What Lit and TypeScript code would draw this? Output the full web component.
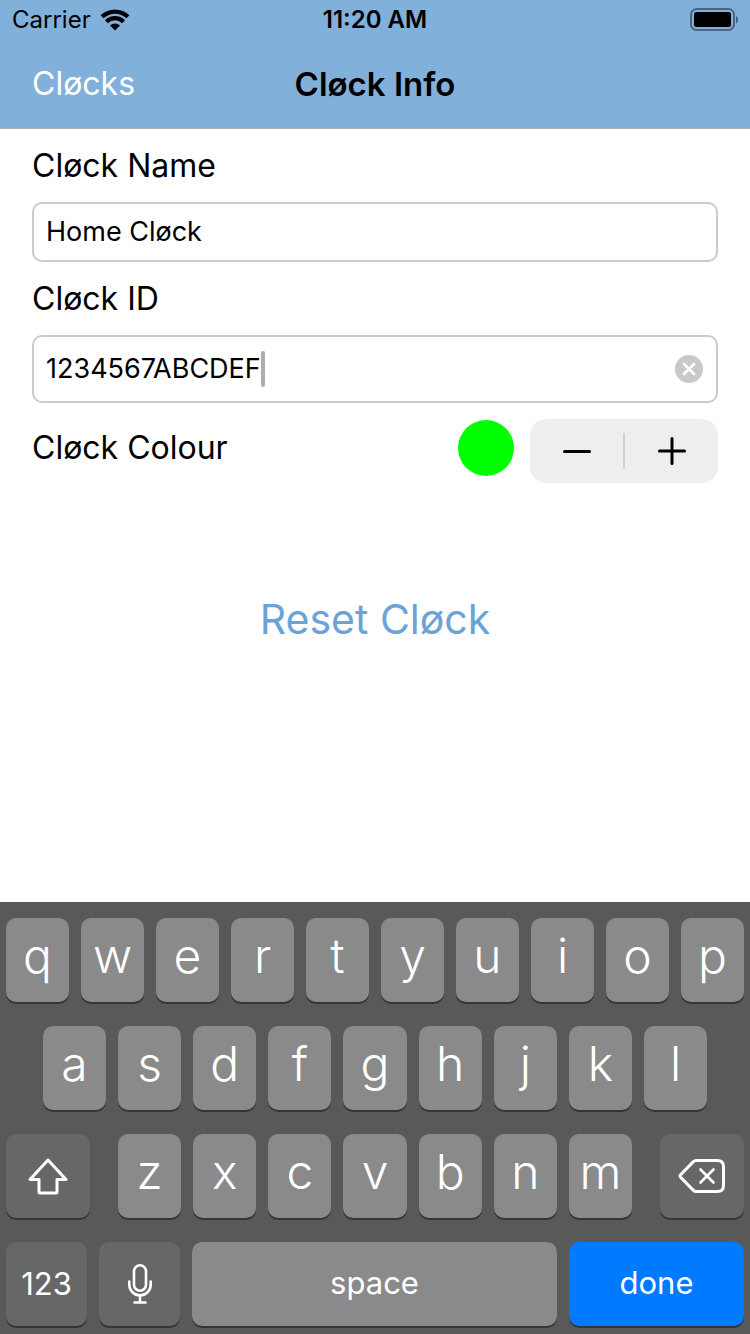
import { LitElement, html, css, svg } from "lit";
import { customElement, property, state } from "lit/decorators.js";
import { classMap } from "lit/directives/class-map.js";

const reset = css`
  *, *::before, *::after { box-sizing: border-box; }
  button, input {
    margin: 0;
    padding: 0;
    border: 0;
    background: none;
    color: inherit;
    font: inherit;
    outline: none;
  }
  button { cursor: pointer; }
  svg { display: block; }
`;

@customElement("status-bar")
export class StatusBar extends LitElement {
  static styles = [reset, css`
    :host {
      display: grid;
      grid-template-columns: 1fr auto 1fr;
      align-items: center;
      height: 40px;
      padding: 0 12px;
      font-size: 24px;
      line-height: 28px;
    }
    .carrier { display: flex; align-items: center; gap: 9px; }
    .time { font-weight: 600; }
    .battery { justify-self: end; }
  `];

  render() {
    return html`
      <span class="carrier">
        Carrier
        <svg width="30" height="22" viewBox="0 0 30 22" role="img" aria-label="Wi-Fi">
          <path d="M.6 6.300a20.600 20.600 0 0 1 28.800 0l-2.900 3a16.500 16.500 0 0 0-23 0z"/>
          <path d="M5 11.200a14.200 14.200 0 0 1 20 0l-3 3a10 10 0 0 0-14 0z"/>
          <path d="M10 16.500a7.200 7.200 0 0 1 10 0L15 21.600z"/>
        </svg>
      </span>
      <span class="time">11:20 AM</span>
      <svg class="battery" width="48" height="24" viewBox="0 0 48 24" role="img" aria-label="Battery full">
        <rect x="1" y="1" width="43" height="21" rx="5.500" fill="none" stroke="#000" stroke-opacity=".42" stroke-width="2"/>
        <rect x="4" y="4" width="37" height="15" rx="2.500"/>
        <path d="M46 8v7.500c2.700-1.300 2.700-6.200 0-7.500z" fill-opacity=".45"/>
      </svg>
    `;
  }
}

type Key = { id: string; label: unknown; name?: string; kind?: "plain" | "dark" | "word" | "dark-word" | "done" };

const letters = (text: string): Key[] => [...text].map((c) => ({ id: c, label: c }));

const shiftIcon = svg`<svg width="42" height="38" viewBox="0 0 42 38" fill="none" stroke="#fff" stroke-width="3" stroke-linejoin="round">
  <path d="M21 3 3 22.500h9V35q0 1 1 1h16q1 0 1-1V22.500h9z"/></svg>`;
const deleteIcon = svg`<svg width="48" height="36" viewBox="0 0 48 36" fill="none" stroke="#fff" stroke-width="3" stroke-linecap="round" stroke-linejoin="round">
  <path d="M18 2.500h21.500q6 0 6 6v19q0 6-6 6H18q-1.500 0-2.600-1.100L2.600 19.200q-1.100-1.200 0-2.400L15.400 3.600Q16.500 2.500 18 2.500z"/>
  <path stroke-width="2.600" d="m22.500 11.500 13 13m0-13-13 13"/></svg>`;
const micIcon = svg`<svg width="26" height="42" viewBox="0 0 26 42" fill="none" stroke="#fff" stroke-width="2.600" stroke-linecap="round">
  <rect x="7" y="2.300" width="12" height="25.500" rx="6"/>
  <path d="M2.300 18.500v3.200a10.700 10.700 0 0 0 21.400 0v-3.200M13 32.500v6M7.500 39.500h11"/></svg>`;

@customElement("key-board")
export class KeyBoard extends LitElement {
  static styles = [reset, css`
    :host {
      display: flex;
      flex-direction: column;
      gap: 24px;
      padding: 16px 6px 8px;
      background: #595959;
      color: #fff;
    }
    .row { display: grid; grid-auto-flow: column; grid-auto-columns: 1fr; gap: 12px; }
    .home { padding: 0 5%; }
    .lower { grid-auto-columns: auto; grid-template-columns: 84fr 514fr 84fr; gap: 28px; }
    .bottom { grid-auto-columns: auto; grid-template-columns: 81fr 81fr 365fr 175fr; }
    .key {
      display: flex;
      align-items: center;
      justify-content: center;
      width: 100%;
      min-width: 0;
      height: 84px;
      padding-bottom: 8px;
      border-radius: 10px;
      background: #8a8a8a;
      box-shadow: 0 2px 0 #353535;
      font-size: 48px;
      font-weight: 300;
      line-height: 58px;
    }
    .word { padding-bottom: 2px; font-size: 31px; font-weight: 400; line-height: 38px; }
    .dark { padding-bottom: 0; background: #676767; }
    .done { background: #007aff; }
  `];

  private key(k: Key) {
    const kind = k.kind ?? "plain";
    return html`<button
      type="button"
      class=${classMap({
        key: true,
        dark: kind === "dark" || kind === "dark-word",
        word: kind === "word" || kind === "dark-word" || kind === "done",
        done: kind === "done",
      })}
      aria-label=${k.name ?? k.id}
      @click=${() => this.dispatchEvent(new CustomEvent("key-press", { detail: k.id }))}
    >${k.label}</button>`;
  }

  render() {
    return html`
      <div class="row">${letters("qwertyuiop").map((k) => this.key(k))}</div>
      <div class="row home">${letters("asdfghjkl").map((k) => this.key(k))}</div>
      <div class="row lower">
        ${this.key({ id: "shift", label: shiftIcon, kind: "dark" })}
        <div class="row">${letters("zxcvbnm").map((k) => this.key(k))}</div>
        ${this.key({ id: "delete", label: deleteIcon, kind: "dark" })}
      </div>
      <div class="row bottom">
        ${this.key({ id: "123", label: "123", kind: "dark-word" })}
        ${this.key({ id: "dictate", label: micIcon, kind: "dark" })}
        ${this.key({ id: "space", label: "space", kind: "word" })}
        ${this.key({ id: "done", label: "done", kind: "done" })}
      </div>
    `;
  }
}

@customElement("colour-stepper")
export class ColourStepper extends LitElement {
  static styles = [reset, css`
    :host {
      display: flex;
      align-items: center;
      width: 188px;
      height: 64px;
      border-radius: 16px;
      background: #eeeef0;
    }
    .step { display: flex; flex: 1; align-items: center; justify-content: center; height: 100%; }
    .divider { width: 2px; height: 36px; background: #d0d0d3; }
  `];

  private step(by: number) {
    this.dispatchEvent(new CustomEvent("step", { detail: by }));
  }

  render() {
    return html`
      <button class="step" type="button" aria-label="Previous colour" @click=${() => this.step(-1)}>
        <svg width="28" height="28" viewBox="0 0 28 28" stroke="#000" stroke-width="3" stroke-linecap="round"><path d="M1.500 14.500h25"/></svg>
      </button>
      <span class="divider"></span>
      <button class="step" type="button" aria-label="Next colour" @click=${() => this.step(1)}>
        <svg width="28" height="28" viewBox="0 0 28 28" stroke="#000" stroke-width="3" stroke-linecap="round"><path d="M1.500 14h25M14 1.500v25"/></svg>
      </button>
    `;
  }
}

const palette = ["#00ff00", "#0080ff", "#ff3b30", "#ffcc00"];

@customElement("app-root")
export class AppRoot extends LitElement {
  static styles = [reset, css`
    :host {
      display: flex;
      flex-direction: column;
      min-height: 100vh;
      background: #fff;
      color: #000;
      font-family: Inter, "Liberation Sans", sans-serif;
    }
    .header { background: #81b0da; border-bottom: 1px solid #a9b0b7; }
    .nav {
      display: grid;
      grid-template-columns: 1fr auto 1fr;
      align-items: center;
      height: 88px;
      padding: 0 32px;
      font-size: 32px;
      line-height: 40px;
    }
    .back { color: #fff; text-decoration: none; }
    .title { margin: 0; font-size: 33px; font-weight: 600; line-height: 40px; }
    .form { display: flex; flex: 1; flex-direction: column; gap: 16px; padding: 16px 32px; }
    .label { font-size: 32px; line-height: 41px; }
    .field {
      display: flex;
      align-items: center;
      height: 60px;
      padding: 0 13px 0 12px;
      border: 2px solid #cbcbcb;
      border-radius: 10px;
      font-size: 27px;
      line-height: 34px;
    }
    .tall { height: 68px; }
    .input { flex: 1; min-width: 0; height: 34px; }
    .hug { flex: 0 1 auto; field-sizing: content; caret-color: transparent; }
    .caret { width: 4px; height: 36px; border-radius: 2px; background: #adadad; }
    .clear { margin-left: auto; }
    .colour { display: flex; align-items: flex-start; gap: 16px; }
    .colour-label { flex: 1; font-size: 32px; line-height: 58px; }
    .swatch { width: 56px; height: 56px; margin-top: 1px; border-radius: 50%; }
    .reset {
      align-self: center;
      margin-top: 94px;
      color: #6ba3d6;
      font-size: 41px;
      line-height: 52px;
    }
  `];

  @property() name = "Home Cløck";
  @state() private clockId = "1234567ABCDEF";
  @state() private colour = 0;

  private onStep(e: CustomEvent<number>) {
    this.colour = (this.colour + e.detail + palette.length) % palette.length;
  }

  private onKey(e: CustomEvent<string>) {
    if (e.detail === "delete") this.clockId = this.clockId.slice(0, -1);
    else if (e.detail === "space") this.clockId += " ";
    else if (e.detail.length === 1) this.clockId += e.detail;
  }

  render() {
    return html`
      <header class="header">
        <status-bar></status-bar>
        <nav class="nav">
          <a class="back" href="#">Cløcks</a>
          <h1 class="title">Cløck Info</h1>
        </nav>
      </header>
      <main class="form">
        <label class="label" for="name">Cløck Name</label>
        <div class="field">
          <input class="input" id="name" type="text" .value=${this.name}
            @input=${(e: Event) => (this.name = (e.target as HTMLInputElement).value)}>
        </div>
        <label class="label" for="clock-id">Cløck ID</label>
        <div class="field tall">
          <input class="input hug" id="clock-id" type="text" .value=${this.clockId}
            @input=${(e: Event) => (this.clockId = (e.target as HTMLInputElement).value)}>
          <span class="caret"></span>
          <button class="clear" type="button" aria-label="Clear text" @click=${() => (this.clockId = "")}>
            <svg width="28" height="28" viewBox="0 0 28 28">
              <circle cx="14" cy="14" r="14" fill="#c9c9c9"/>
              <path d="m9 9 10 10m0-10L9 19" stroke="#fff" stroke-width="2.800" stroke-linecap="round"/>
            </svg>
          </button>
        </div>
        <div class="colour" role="group" aria-labelledby="colour-label">
          <span class="colour-label" id="colour-label">Cløck Colour</span>
          <span class="swatch" style="background:${palette[this.colour]}"></span>
          <colour-stepper @step=${this.onStep}></colour-stepper>
        </div>
        <button class="reset" type="button">Reset Cløck</button>
      </main>
      <key-board @key-press=${this.onKey}></key-board>
    `;
  }
}
